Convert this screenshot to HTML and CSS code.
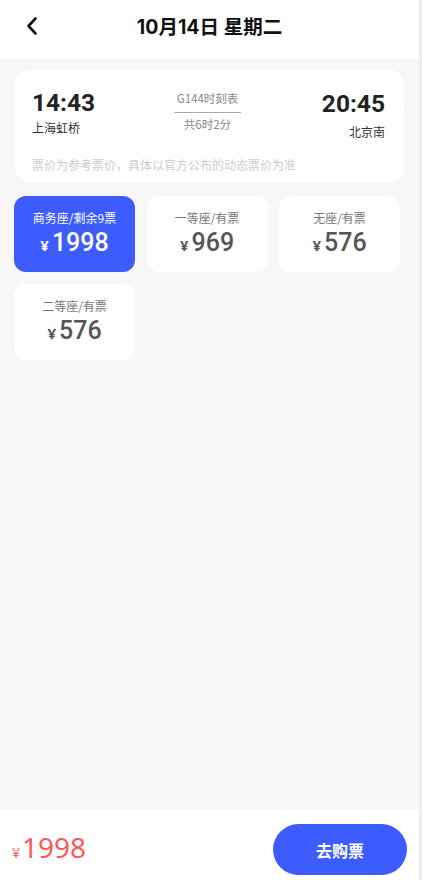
FILE: index.html
```html
<!DOCTYPE html>
<html lang="zh-CN">
<head>
<meta charset="utf-8">
<title>10月14日 星期二</title>
<link rel="stylesheet" href="styles.css">
</head>
<body>
<div class="app">
  <header class="header">
    <span class="back">
      <svg width="14" height="20" viewBox="0 0 14 20"><path d="M10.5 2.5 L3.5 10 L10.5 17.5" fill="none" stroke="#111" stroke-width="2.6" stroke-linecap="round" stroke-linejoin="round"/></svg>
    </span>
    <h1 class="title">10月14日 星期二</h1>
  </header>
  <main class="main">
    <section class="trip">
      <div class="trip-row">
        <div class="stop">
          <div class="time">14:43</div>
          <div class="station">上海虹桥</div>
        </div>
        <div class="mid">
          <div class="train">G144时刻表</div>
          <div class="line"></div>
          <div class="dur">共6时2分</div>
        </div>
        <div class="stop stop-right">
          <div class="time">20:45</div>
          <div class="station">北京南</div>
        </div>
      </div>
      <p class="note">票价为参考票价，具体以官方公布的动态票价为准</p>
    </section>
    <section class="seats">
      <div class="seat seat-active">
        <div class="seat-name">商务座/剩余9票</div>
        <div class="seat-price"><span class="yen">¥</span>1998</div>
      </div>
      <div class="seat">
        <div class="seat-name">一等座/有票</div>
        <div class="seat-price"><span class="yen">¥</span>969</div>
      </div>
      <div class="seat">
        <div class="seat-name">无座/有票</div>
        <div class="seat-price"><span class="yen">¥</span>576</div>
      </div>
      <div class="seat">
        <div class="seat-name">二等座/有票</div>
        <div class="seat-price"><span class="yen">¥</span>576</div>
      </div>
    </section>
  </main>
  <footer class="bar">
    <div class="total"><span class="total-yen">¥</span>1998</div>
    <button class="buy">去购票</button>
  </footer>
</div>
<div class="scrollbar"></div>
</body>
</html>
```
FILE: styles.css
```css
* { box-sizing: border-box; }
html, body { margin: 0; padding: 0; height: 100%; }
body {
  display: flex;
  font-family: "Noto Sans", "Noto Sans CJK SC", sans-serif;
  background: #f7f7f7;
  color: #222;
}
.app {
  width: 419px;
  height: 880px;
  display: flex;
  flex-direction: column;
  background: #f7f7f7;
}
.scrollbar {
  width: 3px;
  height: 880px;
  background: #ececec;
}
.header {
  height: 59px;
  background: #fff;
  display: flex;
  align-items: center;
  justify-content: center;
  position: relative;
  padding-bottom: 8px;
}
.back {
  position: absolute;
  left: 25px;
  top: 16px;
  display: flex;
}
.title {
  margin: 0;
  font-size: 19.5px;
  font-weight: 700;
  color: #111;
  font-family: "Inter", "Noto Sans CJK SC", sans-serif;
}
.main {
  flex: 1;
  padding: 11px 15px 0 14px;
}
.trip {
  background: #fff;
  border-radius: 14px;
  margin-left: 1px;
  padding: 18px 19px 12px 17px;
  height: 112px;
}
.trip-row {
  display: grid;
  grid-template-columns: 1fr auto 1fr;
  align-items: start;
}
.time {
  font-family: "Roboto", "Noto Sans", sans-serif;
  font-size: 24.5px;
  font-weight: 700;
  line-height: 30px;
  color: #222;
}
.station {
  font-size: 12px;
  line-height: 16px;
  color: #333;
  margin-top: 2px;
  font-family: "Noto Sans CJK SC", sans-serif;
}
.stop-right { text-align: right; padding-top: 1px; }
.stop-right .station { margin-top: 5px; }
.mid {
  display: flex;
  flex-direction: column;
  align-items: center;
  padding-top: 3px;
  padding-right: 2px;
}
.train, .dur {
  font-size: 11.5px;
  line-height: 14px;
  color: #888;
  font-family: "Noto Sans CJK SC", sans-serif;
}
.line {
  width: 67px;
  height: 1px;
  background: #aaa;
  margin: 7px 0 4px;
}
.note {
  margin: 17px 0 0;
  font-size: 12px;
  line-height: 16px;
  color: #cdcdcd;
  font-family: "Noto Sans CJK SC", sans-serif;
}
.seats {
  margin-top: 14px;
  display: grid;
  grid-template-columns: repeat(3, 121px);
  column-gap: 11.5px;
  row-gap: 12px;
}
.seat {
  height: 76px;
  background: #fff;
  border-radius: 12px;
  display: flex;
  flex-direction: column;
  align-items: center;
  padding-top: 14px;
}
.seat-active { background: #3d5cfe; }
.seat-name {
  font-size: 12px;
  line-height: 16px;
  color: #777;
  font-family: "Noto Sans CJK SC", sans-serif;
}
.seat-price {
  font-family: "Roboto", "Noto Sans", sans-serif;
  font-size: 25px;
  line-height: 30px;
  font-weight: 500;
  color: #555;
  margin-top: 2px;
}
.yen {
  font-family: "Noto Sans", sans-serif;
  font-size: 15px;
  font-weight: 700;
  margin-right: 3px;
}
.seat-active .seat-name, .seat-active .seat-price { color: #fff; }
.bar {
  height: 70px;
  background: #fff;
  display: flex;
  align-items: center;
  justify-content: space-between;
  padding: 0 12px 0 12px;
}
.total {
  color: #fa5a5a;
  font-size: 28px;
  line-height: 32px;
  margin-top: 10px;
}
.total-yen {
  font-size: 14px;
  margin-right: 2px;
}
.buy {
  width: 134px;
  height: 51px;
  border: none;
  border-radius: 26px;
  background: #3d5cfe;
  color: #fff;
  font-size: 16px;
  font-weight: 700;
  font-family: "Noto Sans CJK SC", sans-serif;
  margin-top: 9px;
}
```
